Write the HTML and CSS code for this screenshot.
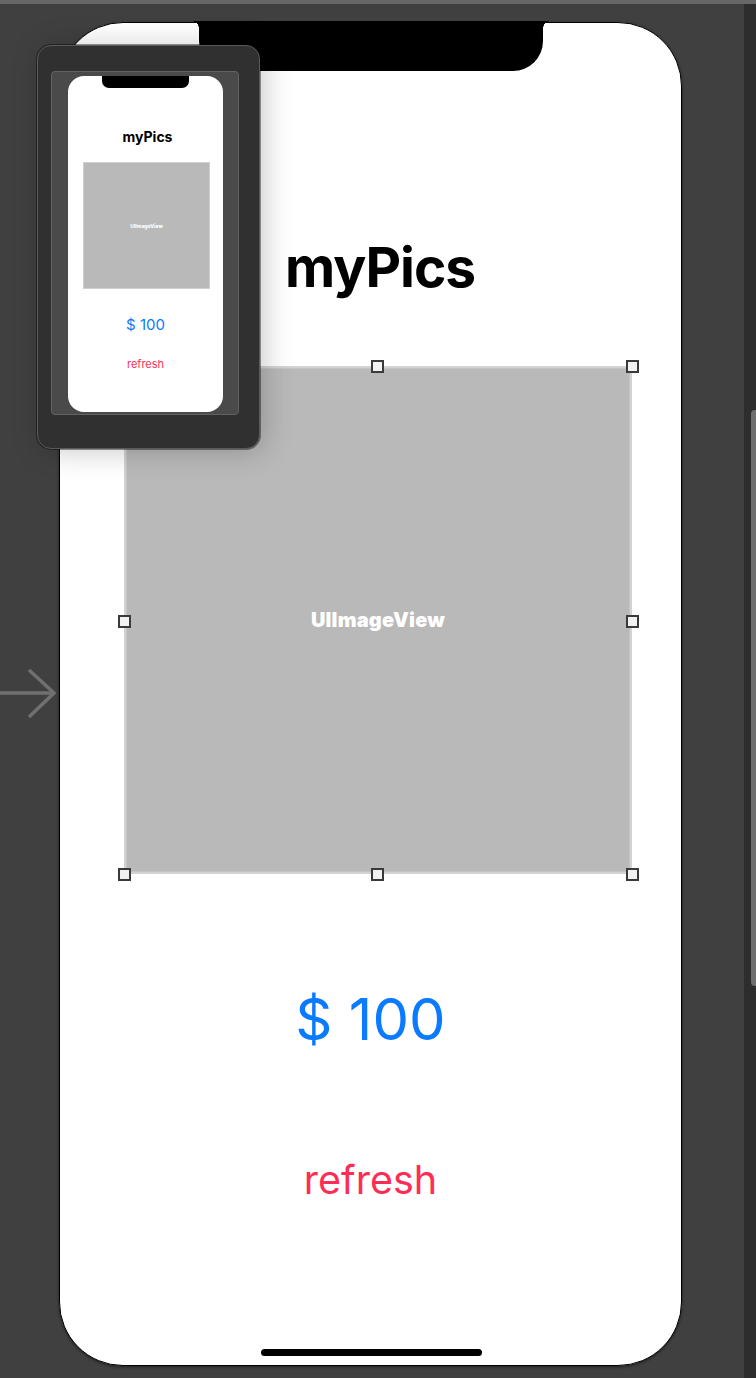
FILE: index.html
```html
<!DOCTYPE html>
<html lang="en">
<head>
  <meta charset="UTF-8">
  <meta name="viewport" content="width=device-width, initial-scale=1.0">
  <title>myPics storyboard</title>
  <link rel="stylesheet" href="styles.css">
</head>
<body>
  <div class="topbar"></div>

  <div class="stage">
    <svg class="entry-arrow" width="60" height="56" viewBox="0 0 60 56">
      <path d="M0 28 H54 M29 5 L54 28 L29 52" fill="none" stroke="#707070" stroke-width="3.5"/>
    </svg>

    <div class="phone">
      <div class="notch"></div>
      <h1 class="title">myPics</h1>
      <div class="image-view">
        <span>UIImageView</span>
        <i class="handle h-tl"></i>
        <i class="handle h-tc"></i>
        <i class="handle h-tr"></i>
        <i class="handle h-ml"></i>
        <i class="handle h-mr"></i>
        <i class="handle h-bl"></i>
        <i class="handle h-bc"></i>
        <i class="handle h-br"></i>
      </div>
      <div class="price">$ 100</div>
      <div class="refresh">refresh</div>
      <div class="home-bar"></div>
    </div>

    <div class="minimap">
      <div class="mini-frame">
        <div class="mini-screen">
          <div class="mini-notch"></div>
          <div class="mini-title">myPics</div>
          <div class="mini-image">UIImageView</div>
          <div class="mini-price">$ 100</div>
          <div class="mini-refresh">refresh</div>
        </div>
      </div>
    </div>

    <div class="side-strip">
      <div class="scroll-thumb"></div>
    </div>
  </div>
</body>
</html>
```

FILE: styles.css
```css
body {
  margin: 0;
  width: 756px;
  height: 1378px;
  overflow: hidden;
  background-color: #404040;
  font-family: 'Inter', 'Liberation Sans', sans-serif;
}

.topbar {
  height: 4px;
  background-color: #676767;
}

.stage {
  position: relative;
  display: flex;
  padding: 18px 0 0 59px;
}

.entry-arrow {
  position: absolute;
  left: 0;
  top: 661px;
}

/* phone canvas */
.phone {
  position: relative;
  box-sizing: border-box;
  width: 623px;
  height: 1344px;
  background-color: #fff;
  border: 1.5px solid #000;
  border-radius: 64px;
  box-shadow: 0 1px 3px rgba(0, 0, 0, 0.5);
  display: flex;
  flex-direction: column;
  align-items: center;
}

.notch {
  position: absolute;
  top: -2px;
  left: 139px;
  width: 344px;
  height: 50px;
  background-color: #000;
  border-radius: 0 0 30px 30px;
}

.notch::before, .notch::after {
  content: "";
  position: absolute;
  top: 0;
  width: 7px;
  height: 7px;
}

.notch::before {
  left: -7px;
  background: radial-gradient(circle at 0 100%, transparent 6.5px, #000 7px);
}

.notch::after {
  right: -7px;
  background: radial-gradient(circle at 100% 100%, transparent 6.5px, #000 7px);
}

.title {
  margin: 217px 0 0 19px;
  font-size: 55px;
  line-height: 1;
  font-weight: 700;
  color: #000;
  letter-spacing: -1px;
}

.image-view {
  position: relative;
  margin: 71px 0 0 15px;
  width: 508px;
  height: 508px;
  background-color: #b9b9b9;
  box-shadow: inset 0 0 0 2px #d3d3d3, inset 0 0 0 3px #c4c4c4;
  display: flex;
  align-items: center;
  justify-content: center;
}

.image-view span {
  color: #fff;
  font-size: 20px;
  font-weight: 900;
  letter-spacing: 0.2px;
}

.handle {
  position: absolute;
  box-sizing: border-box;
  width: 13px;
  height: 13px;
  border: 2px solid #3a3a3a;
  background-color: #f2f2f2;
}

.h-tl { left: -6px; top: -6px; }
.h-tc { left: 247px; top: -6px; }
.h-tr { right: -7px; top: -6px; }
.h-ml { left: -6px; top: 249px; }
.h-mr { right: -7px; top: 249px; }
.h-bl { left: -6px; bottom: -7px; }
.h-bc { left: 247px; bottom: -7px; }
.h-br { right: -7px; bottom: -7px; }

.price {
  margin-top: 116px;
  font-size: 58px;
  line-height: 1;
  color: #0a7aff;
}

.refresh {
  margin-top: 113px;
  font-size: 39.5px;
  line-height: 1;
  color: #ff2d55;
}

.home-bar {
  position: absolute;
  bottom: 9px;
  left: 50%;
  width: 221px;
  height: 7px;
  margin-left: -110px;
  border-radius: 4px;
  background-color: #000;
}

/* scene thumbnail */
.minimap {
  position: absolute;
  left: 37px;
  top: 41px;
  box-sizing: border-box;
  width: 223px;
  height: 404px;
  padding: 25px 20px 33px 13px;
  background-color: #303030;
  border: 1px solid #5a5a5a;
  border-radius: 14px;
  box-shadow: 4px 2px 30px rgba(0, 0, 0, 0.22), 0 0 0 1px rgba(0, 0, 0, 0.4);
}

.mini-frame {
  box-sizing: border-box;
  height: 100%;
  padding: 4px 15px 2px 16px;
  background-color: #4a4a4a;
  border: 1px solid #626262;
  border-radius: 4px;
}

.mini-screen {
  position: relative;
  height: 100%;
  background-color: #fff;
  border-radius: 16px;
  display: flex;
  flex-direction: column;
  align-items: center;
}

.mini-notch {
  position: absolute;
  top: 0;
  left: 34px;
  width: 87px;
  height: 12px;
  background-color: #000;
  border-radius: 0 0 7px 7px;
}

.mini-title {
  margin: 54px 0 0 4px;
  font-size: 14px;
  line-height: 1;
  font-weight: 700;
}

.mini-image {
  margin: 18px 0 0 2px;
  width: 127px;
  height: 127px;
  background-color: #b9b9b9;
  box-shadow: inset 0 0 0 1px #d0d0d0;
  display: flex;
  align-items: center;
  justify-content: center;
  color: #fff;
  font-size: 5px;
  font-weight: 800;
}

.mini-price {
  margin-top: 28px;
  font-size: 15px;
  line-height: 1;
  color: #0a7aff;
}

.mini-refresh {
  margin-top: 27px;
  font-size: 11px;
  line-height: 1;
  color: #ff2d55;
}

.side-strip {
  position: absolute;
  top: 0;
  right: 0;
  width: 12px;
  height: 1374px;
  background-color: #2d2d2d;
}

.scroll-thumb {
  margin: 406px 0 0 7px;
  height: 576px;
  background-color: #6e6e6e;
  border-radius: 4px 0 0 4px;
}
```
